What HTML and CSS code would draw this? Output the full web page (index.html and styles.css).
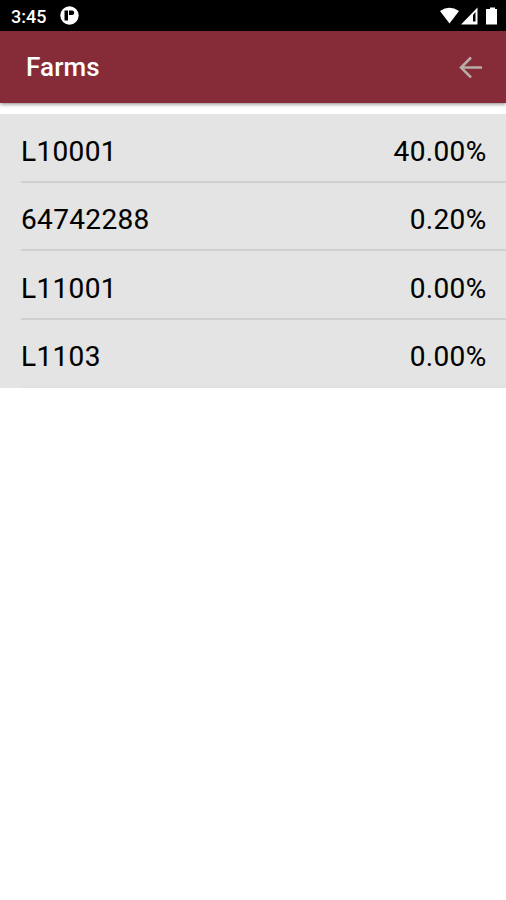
FILE: index.html
```html
<!DOCTYPE html>
<html lang="en">
<head>
<meta charset="utf-8">
<title>Farms</title>
<link rel="stylesheet" href="styles.css">
</head>
<body>
<div class="status">
  <span class="time">3:45</span>
  <svg width="19" height="19" viewBox="0 0 19 19"><circle cx="9.500" cy="9.500" r="9.200" fill="#fff"/><path d="M4.500 4.500H8V14.500H4.500zM9 4.500h3a2.200 2.200 0 0 1 0 4.400H9z" fill="#000"/></svg>
  <svg class="signals" width="58" height="18" viewBox="0 0 58 18" fill="#fff"><path d="M0 4Q9.500-2.500 19 4L9.500 16.500z"/><path fill-rule="evenodd" d="M37.500 0.500V17.500H21zM35.500 5v9.500h-2.500V8z"/><path d="M48 2h2V0.500h5V2h2v15.500H46V2z"/></svg>
</div>
<header class="bar">
  <h1>Farms</h1>
  <svg width="24" height="22" viewBox="0 0 24 22" fill="none" stroke="#b9aba8" stroke-width="2.500"><path d="M23 11.500H2M12 1.500L2 11.500l10 10"/></svg>
</header>
<main class="list">
  <div class="row"><span>L10001</span><span>40.00%</span></div>
  <div class="row"><span>64742288</span><span>0.20%</span></div>
  <div class="row"><span>L11001</span><span>0.00%</span></div>
  <div class="row"><span>L1103</span><span>0.00%</span></div>
</main>
</body>
</html>
```
FILE: styles.css
```css
body { margin: 0; background: #fff; font-family: Roboto, sans-serif; color: #000; }
.status { height: 31px; background: #000; color: #fff; display: flex; align-items: center; padding: 0 8px 0 11px; }
.time { font-size: 18px; font-weight: 500; line-height: 31px; width: 49px; padding-top: 1px; }
.signals { margin-left: auto; }
.bar { height: 72px; background: #862c38; display: flex; align-items: center; justify-content: space-between; padding: 0 23px 0 26px; box-shadow: 0 1px 4px rgba(0,0,0,.5); }
h1 { margin: 0; color: #fff; font-size: 26px; font-weight: 500; letter-spacing: .15px; }
.list { margin-top: 11px; background: #e4e4e4; padding-left: 21px; }
.row { height: 68.500px; box-sizing: border-box; border-bottom: 2px solid #d0d0d0; display: flex; justify-content: space-between; align-items: center; padding: 7.500px 19.500px 0 0; font-size: 28px; letter-spacing: .35px; -webkit-text-stroke: .1px #000; }
.row:last-child { border-bottom-color: #e0e0e0; }
```
